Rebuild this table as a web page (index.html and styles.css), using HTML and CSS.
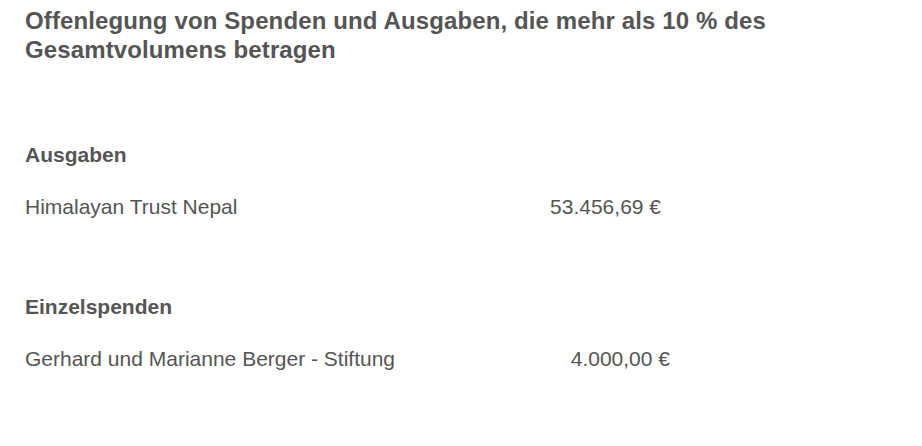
FILE: index.html
```html
<!DOCTYPE html>
<html>
  <head>
    <title>Offenlegung</title>
    <link rel="stylesheet" href="styles.css">
  </head>
  <body>
    <div class="container">
      <h1 class="title">Offenlegung von Spenden und Ausgaben, die mehr als 10 % des Gesamtvolumens betragen</h1>

      <!-- Ausgaben -->
      <section class="section">
        <h2 class="section-title">Ausgaben</h2>
        <div class="rows rows-ausgaben">
          <span class="name">Himalayan Trust Nepal</span>
          <span class="amount">53.456,69 €</span>
        </div>
      </section>

      <!-- Einzelspenden -->
      <section class="section">
        <h2 class="section-title">Einzelspenden</h2>
        <div class="rows rows-spenden">
          <span class="name">Gerhard und Marianne Berger - Stiftung</span>
          <span class="amount">4.000,00 €</span>
        </div>
      </section>
    </div>
  </body>
</html>
```

FILE: styles.css
```css
body {
  margin: 0;
  background-color: #fff;
  color: #555;
  font-family: "Liberation Sans", Arial, sans-serif;
}
.container {
  padding: 6px 25px 0 25px;
  width: 780px;
}
.title {
  margin: 0;
  font-size: 24px;
  line-height: 29px;
  font-weight: bold;
  letter-spacing: 0.12px;
}
.section {
  margin-top: 79px;
}
.section + .section {
  margin-top: 76px;
}
.section-title {
  margin: 0;
  font-size: 21px;
  line-height: 24px;
  font-weight: bold;
}
.rows {
  display: grid;
  margin-top: 28px;
  font-size: 21px;
  line-height: 24px;
}
.rows-ausgaben {
  grid-template-columns: 500px 136px;
}
.rows-spenden {
  grid-template-columns: 500px 145px;
}
.amount {
  text-align: right;
}
```
